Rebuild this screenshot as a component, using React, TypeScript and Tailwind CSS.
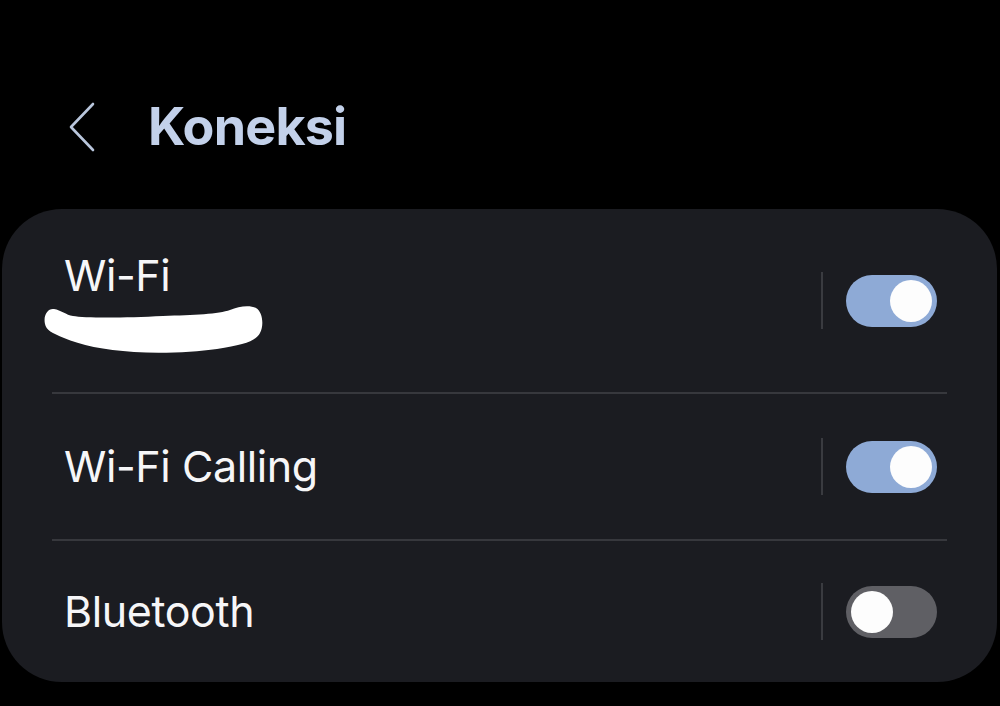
import React from 'react';

const Toggle: React.FC<{ on: boolean }> = ({ on }) => (
  <div className="flex items-center gap-[23px]">
    <div className="w-[2px] h-[57px] bg-[#3a3b40]" />
    <div
      className={`w-[91px] h-[52px] rounded-full p-[5px] flex items-center ${
        on ? 'bg-[#8eaad6] justify-end' : 'bg-[#5f5f64] justify-start'
      }`}
    >
      <div className="w-[42px] h-[42px] rounded-full bg-[#fdfdfd]" />
    </div>
  </div>
);

const Scribble = () => (
  <svg width="220" height="50" viewBox="0 0 220 50" className="-ml-[20px] mt-[8px] block">
    <path
      d="M1 19 C-1 10 4 3 10 4 C17 5 22 10 29 11 C40 13 80 13 119 11 C150 10 175 9 186 5 C195 1 206 0 212 3 C219 7 220 21 216 28 C212 36 200 40 173 44 C150 47 119 49 90 47 C60 45 36 40 20 33 C8 28 2 25 1 19 Z"
      fill="#ffffff"
    />
  </svg>
);

const App: React.FC = () => {
  return (
    <div
      className="w-[1000px] h-[706px] bg-black overflow-hidden"
      style={{ fontFamily: 'Inter, "Noto Sans", sans-serif' }}
    >
      {/* Header */}
      <div className="h-[209px] pt-[45px] flex items-center pl-[68px]">
        <svg width="28" height="50" viewBox="0 0 28 50" className="block">
          <path d="M25 2 L3 25 L25 48" fill="none" stroke="#b9c6dc" strokeWidth="2.6" strokeLinecap="round" strokeLinejoin="round" />
        </svg>
        <h1 className="ml-[52px] text-[52px] font-bold text-[#c3d1ea] leading-none tracking-[-0.8px]">Koneksi</h1>
      </div>

      {/* Card */}
      <div className="ml-[2px] w-[995px] h-[473px] rounded-[60px] bg-[#1b1c21] px-[50px]">
        <div className="h-[183px] flex items-center justify-between pr-[10px]">
          <div className="pl-[12px] pt-[8px]">
            <div className="text-[43px] leading-none tracking-[-0.4px] text-[#f6f6f8]">Wi-Fi</div>
            <Scribble />
          </div>
          <Toggle on />
        </div>
        <div className="h-[2px] bg-[#37383d]" />
        <div className="h-[145px] flex items-center justify-between pr-[10px]">
          <div className="pl-[12px] text-[43px] leading-none tracking-[-0.4px] text-[#f6f6f8]">Wi-Fi Calling</div>
          <Toggle on />
        </div>
        <div className="h-[2px] bg-[#37383d]" />
        <div className="h-[141px] flex items-center justify-between pr-[10px]">
          <div className="pl-[12px] text-[43px] leading-none tracking-[-0.4px] text-[#f6f6f8]">Bluetooth</div>
          <Toggle on={false} />
        </div>
      </div>
    </div>
  );
};

export default App;
